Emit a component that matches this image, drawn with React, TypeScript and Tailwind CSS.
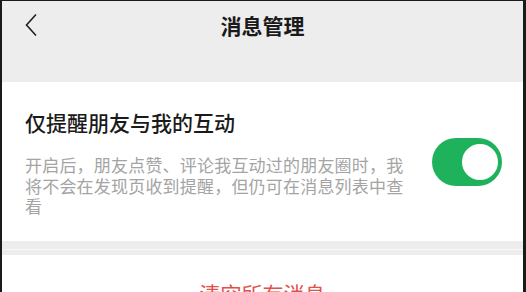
import React from "react";

const font = { fontFamily: '"Noto Sans CJK SC", "Noto Sans", sans-serif' };

function Toggle() {
  return (
    <div className="relative h-[48px] w-[70px] shrink-0 rounded-full bg-[#1fb25c]">
      <div className="absolute right-[2px] top-[4px] h-[40px] w-[40px] rounded-full border-2 border-[#1fb25c] bg-white" />
    </div>
  );
}

export default function App() {
  return (
    <div
      className="h-[292px] w-[526px] overflow-hidden border-l-2 border-r-[3px] border-t border-[#1a1a1a] bg-white"
      style={font}
    >
      <div className="h-[81px] bg-[#ededed]">
        <div className="relative flex h-[48px] items-center justify-center">
          <svg
            className="absolute left-[22px] top-[12px]"
            width="14"
            height="24"
            viewBox="0 0 14 24"
            fill="none"
          >
            <path d="M12 1.5 L2.5 12 L12 22.5" stroke="#222" strokeWidth="1.6" />
          </svg>
          <span className="text-[21px] font-semibold leading-[30px] text-[#1a1a1a]">消息管理</span>
        </div>
      </div>

      <div className="flex items-center pb-[24px] pl-[23px] pr-[21px] pt-[25px]">
        <div className="flex-1">
          <div className="text-[21px] font-medium leading-[30px] text-[#1a1a1a]">仅提醒朋友与我的互动</div>
          <p className="mt-[18px] w-[388px] text-[17px] leading-[20.5px] tracking-[0.2px] text-[#a4a4a4]">
            开启后，朋友点赞、评论我互动过的朋友圈时，我将不会在发现页收到提醒，但仍可在消息列表中查看
          </p>
        </div>
        <Toggle />
      </div>

      <div className="h-[14px] bg-[#ededed]">
        <div className="h-[9px] border-b border-[#f7f7f7]" />
      </div>

      <div className="pt-[23px] text-center text-[21px] leading-[30px] text-[#e2504c]">清空所有消息</div>
    </div>
  );
}
